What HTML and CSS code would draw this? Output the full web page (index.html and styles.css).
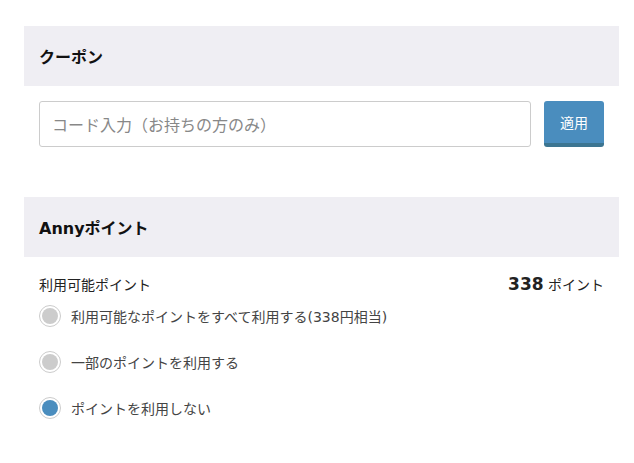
FILE: index.html
```html
<!DOCTYPE html>
<html lang="ja">
<head>
    <meta charset="UTF-8">
    <meta name="viewport" content="width=device-width, initial-scale=1.0">
    <title>クーポン・ポイント</title>
    <link rel="stylesheet" href="styles.css">
</head>
<body>
    <div class="page">
        <section class="block">
            <h2 class="block-title">クーポン</h2>
            <div class="coupon-row">
                <input type="text" class="coupon-input" placeholder="コード入力（お持ちの方のみ）">
                <button type="button" class="apply-btn">適用</button>
            </div>
        </section>

        <section class="block points">
            <h2 class="block-title">Annyポイント</h2>
            <div class="points-body">
                <div class="points-avail">
                    <span>利用可能ポイント</span>
                    <span class="points-value"><b>338</b> ポイント</span>
                </div>
                <label class="radio-row">
                    <input type="radio" name="use_point" value="all">
                    <span class="radio-mark"></span>
                    利用可能なポイントをすべて利用する(338円相当)
                </label>
                <label class="radio-row">
                    <input type="radio" name="use_point" value="part">
                    <span class="radio-mark"></span>
                    一部のポイントを利用する
                </label>
                <label class="radio-row">
                    <input type="radio" name="use_point" value="none" checked>
                    <span class="radio-mark"></span>
                    ポイントを利用しない
                </label>
            </div>
        </section>
    </div>
</body>
</html>
```

FILE: styles.css
```css
body {
    margin: 0;
    font-family: "DejaVu Sans", "Noto Sans CJK JP", sans-serif;
    color: #333;
    background: #fff;
}
.page {
    padding: 26px 15px 0 24px;
}
.block-title {
    margin: 0;
    height: 60px;
    display: flex;
    align-items: center;
    padding-left: 15px;
    background-color: #efeef3;
    font-size: 16px;
    font-weight: bold;
    color: #111;
}
.coupon-row {
    display: flex;
    gap: 13px;
    padding: 15px 15px 0 15px;
}
.coupon-input {
    flex: 1;
    height: 46px;
    box-sizing: border-box;
    border: 1px solid #ccc;
    border-radius: 3px;
    padding: 0 12px;
    font-family: "Noto Sans CJK JP", sans-serif;
    font-size: 16px;
    color: #333;
}
.coupon-input::placeholder {
    color: #888;
}
.apply-btn {
    width: 60px;
    height: 46px;
    border: none;
    border-bottom: 4px solid #3c7591;
    border-radius: 3px;
    background-color: #4a8dbe;
    color: #fff;
    font-family: inherit;
    font-size: 14px;
    padding: 0;
    cursor: pointer;
}
.points {
    margin-top: 50px;
}
.points-body {
    padding: 17px 15px 0 15px;
}
.points-avail {
    display: flex;
    justify-content: space-between;
    align-items: baseline;
    font-size: 14px;
    color: #222;
}
.points-value b {
    font-size: 17px;
}
.radio-row {
    display: flex;
    align-items: center;
    gap: 10px;
    height: 24px;
    margin-top: 22px;
    font-size: 14px;
    color: #444;
    cursor: pointer;
}
.points-avail + .radio-row {
    margin-top: 10px;
}
.radio-row input {
    display: none;
}
.radio-mark {
    width: 20px;
    height: 20px;
    border: 1px solid #ccc;
    border-radius: 50%;
    background-color: #fff;
    display: flex;
    align-items: center;
    justify-content: center;
}
.radio-mark::after {
    content: "";
    width: 16px;
    height: 16px;
    border-radius: 50%;
    background-color: #ccc;
}
.radio-row input:checked + .radio-mark::after {
    background-color: #4a8dbe;
}
```
